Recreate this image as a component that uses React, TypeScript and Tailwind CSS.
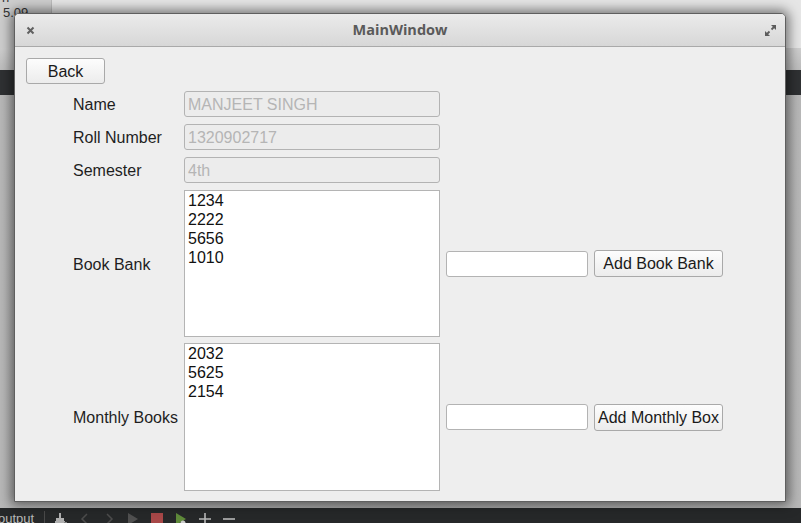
import React from 'react';

const bookBank = ['1234', '2222', '5656', '1010'];
const monthlyBooks = ['2032', '5625', '2154'];

const font = { fontFamily: '"Liberation Sans", Arial, sans-serif' };

function QButton({ label, className }: { label: string; className: string }) {
  return (
    <button
      className={`flex items-center justify-center rounded-[3px] border border-[#a9a9a9] bg-gradient-to-b from-[#fdfdfd] to-[#ececec] pt-px text-[16px] leading-none text-[#1a1a1a] ${className}`}
    >
      {label}
    </button>
  );
}

function Row({ label, children, className = '' }: { label: string; children: React.ReactNode; className?: string }) {
  return (
    <div className={`flex items-center ${className}`}>
      <div className="mt-[2px] w-[111px] text-[16px] text-[#1e1e1e]">{label}</div>
      {children}
    </div>
  );
}

function DisabledField({ value }: { value: string }) {
  return (
    <div className="flex h-[26px] w-[256px] items-center rounded-[3px] border border-[#b3b3b3] bg-[#ececec] pl-[3px] pt-px text-[16px] text-[#b5b5b5]">
      {value}
    </div>
  );
}

function ListBox({ items, h }: { items: string[]; h: string }) {
  return (
    <div className={`w-[256px] ${h} border border-[#b4b4b4] bg-white pl-[3px] text-[16px] leading-[19px] text-[#111]`}>
      {items.map((i) => (
        <div key={i}>{i}</div>
      ))}
    </div>
  );
}

function ExpandIcon() {
  return (
    <svg width="13" height="13" viewBox="0 0 13 13" fill="#5c5c5c">
      <polygon points="7,1 12,1 12,6" />
      <line x1="7.5" y1="5.5" x2="10.5" y2="2.5" stroke="#5c5c5c" strokeWidth="1.8" />
      <polygon points="1,7 1,12 6,12" />
      <line x1="2.5" y1="10.5" x2="5.5" y2="7.5" stroke="#5c5c5c" strokeWidth="1.8" />
    </svg>
  );
}

function CloseIcon() {
  return (
    <svg width="9" height="9" viewBox="0 0 9 9">
      <path d="M1.5 1.5 L7.5 7.5 M7.5 1.5 L1.5 7.5" stroke="#606060" strokeWidth="2" />
    </svg>
  );
}

function Toolbar() {
  return (
    <div className="flex h-[15px] items-start overflow-hidden bg-[#262829]" style={font}>
      <div className="-ml-[2px] mt-[4px] text-[13px] leading-none text-[#b8b8b8]">output</div>
      <div className="ml-[10px] mt-[3px] h-[12px] w-px bg-[#4a4a4a]" />
      <div className="ml-[10px] mt-[5px] flex items-start gap-[12px]">
        <svg width="12" height="12" viewBox="0 0 12 12" fill="#b0b0b0">
          <rect x="4" y="0" width="2" height="5" />
          <rect x="1" y="5" width="8" height="3" />
          <rect x="0" y="8" width="10" height="4" />
          <rect x="9" y="9" width="3" height="3" fill="#808080" />
        </svg>
        <svg width="12" height="12" viewBox="0 0 12 12">
          <path d="M8 1 L3 6 L8 11" stroke="#4c4c4c" strokeWidth="1.5" fill="none" />
        </svg>
        <svg width="12" height="12" viewBox="0 0 12 12">
          <path d="M4 1 L9 6 L4 11" stroke="#4c4c4c" strokeWidth="1.5" fill="none" />
        </svg>
        <svg width="12" height="12" viewBox="0 0 12 12" fill="#505050">
          <polygon points="1,0 11,6 1,12" />
        </svg>
        <div className="h-[12px] w-[12px] bg-[#a84848]" />
        <svg width="12" height="12" viewBox="0 0 12 12">
          <polygon points="1,0 11,6 1,12" fill="#5f8a3a" />
          <circle cx="8" cy="10" r="2.5" fill="#c9c9c9" />
        </svg>
        <svg width="12" height="12" viewBox="0 0 12 12">
          <path d="M6 0 V12 M0 6 H12" stroke="#b8b8b8" strokeWidth="1.6" />
        </svg>
        <svg width="12" height="12" viewBox="0 0 12 12">
          <path d="M0 6 H12" stroke="#b8b8b8" strokeWidth="1.6" />
        </svg>
      </div>
    </div>
  );
}

export default function App() {
  return (
    <div className="relative flex h-[523px] w-[801px] flex-col overflow-hidden bg-[#b5b5b5]" style={font}>
      {/* desktop behind the dialog */}
      <div className="flex h-[48px]">
        <div className="relative w-[52px] overflow-hidden border-r border-[#bcbcbc] bg-[#cecece] text-[13px] leading-[13px] text-[#333]">
          <div className="-mt-[9px] pl-[2px]">n</div>
          <div className="mt-[2px] pl-[3px]">5.09</div>
        </div>
        <div className="flex-1 bg-[#e6e6e6]" />
      </div>
      <div className="h-[22px] bg-gradient-to-b from-[#cfcfcf] to-[#bdbdbd]" />
      <div className="h-[25px] bg-[#2f3133]" />
      <div className="flex-1 bg-gradient-to-r from-[#b8b8b8] via-[#a5a5a5] to-[#b8b8b8]" />
      <Toolbar />

      {/* dialog window */}
      <div className="absolute left-[14px] top-[13px] flex h-[489px] w-[772px] flex-col overflow-hidden rounded-t-[5px] border border-[#5f5f5f] bg-[#eeeeee] shadow-[0_0_12px_3px_rgba(0,0,0,0.5)]">
        <div className="relative flex h-[33px] shrink-0 items-center justify-center border-b border-[#a9a9a9] bg-gradient-to-b from-[#ebebeb] to-[#d7d7d7]">
          <div className="absolute left-[11px] top-[12px] flex">
            <CloseIcon />
          </div>
          <span className="text-[14.5px] font-bold text-[#5a5a5a]" style={{ fontFamily: '"Open Sans", "DejaVu Sans", sans-serif' }}>
            MainWindow
          </span>
          <div className="absolute right-[8px] top-[10px] flex">
            <ExpandIcon />
          </div>
        </div>

        <div className="flex flex-col px-[11px] pt-[11px]">
          <QButton label="Back" className="h-[26px] w-[79px]" />

          <div className="ml-[47px] mt-[7px] flex flex-col gap-[7px]">
            <Row label="Name">
              <DisabledField value="MANJEET SINGH" />
            </Row>
            <Row label="Roll Number">
              <DisabledField value="1320902717" />
            </Row>
            <Row label="Semester">
              <DisabledField value="4th" />
            </Row>
            <Row label="Book Bank">
              <ListBox items={bookBank} h="h-[147px]" />
              <div className="ml-[6px] h-[26px] w-[142px] rounded-[3px] border border-[#b3b3b3] bg-white" />
              <QButton label="Add Book Bank" className="ml-[6px] h-[27px] w-[129px]" />
            </Row>
            <Row label="Monthly Books" className="-mt-px">
              <ListBox items={monthlyBooks} h="h-[148px]" />
              <div className="ml-[6px] h-[26px] w-[142px] rounded-[3px] border border-[#b3b3b3] bg-white" />
              <QButton label="Add Monthly Box" className="ml-[6px] h-[27px] w-[129px]" />
            </Row>
          </div>
        </div>
      </div>
    </div>
  );
}
